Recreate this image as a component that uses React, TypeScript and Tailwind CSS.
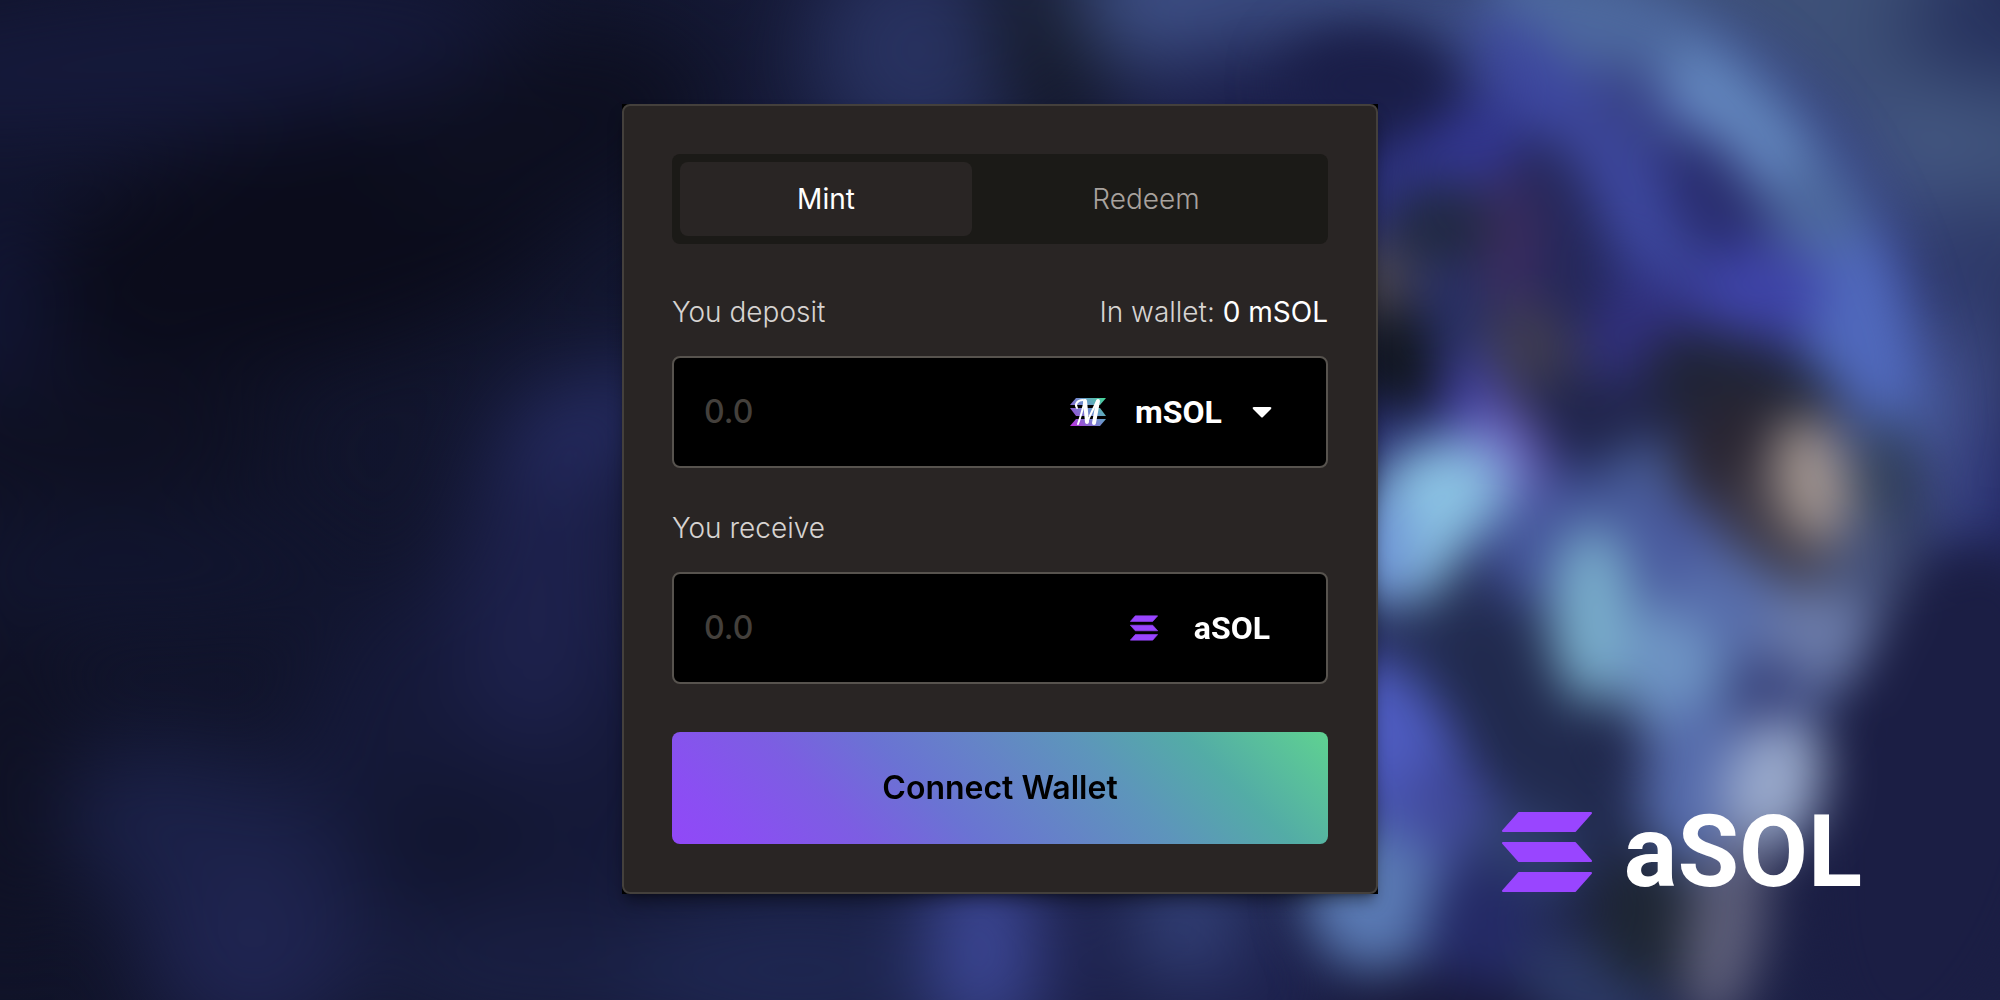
import { useId, useState } from "react";

type Blob = [cx: number, cy: number, rx: number, ry: number, rotate: number, fill: string];

const glow: Blob[] = [
  [140, 60, 380, 80, -6, "#15193a"],
  [0, 310, 50, 120, 0, "#121636"],
  [310, 240, 280, 120, -14, "#0b0c1b"],
  [550, 130, 160, 90, -15, "#0d0f20"],
  [90, 440, 200, 60, 0, "#0e1022"],
  [140, 570, 220, 50, 0, "#11152f"],
  [500, 760, 200, 200, 0, "#151939"],
  [550, 560, 90, 190, 8, "#1d214c"],
  [610, 415, 110, 26, -26, "#2c3474"],
  [220, 850, 170, 90, 20, "#1b2148"],
  [250, 960, 110, 90, 10, "#1f2450"],
  [10, 780, 60, 160, 0, "#0f1124"],
  [440, 840, 100, 50, 0, "#11152f"],
  [600, 980, 240, 60, 0, "#1a2044"],
  [920, 50, 110, 110, 0, "#283260"],
  [800, 970, 180, 90, 0, "#1e2650"],
  [985, 940, 46, 120, 0, "#4450a8"],
  [1100, 970, 60, 80, 0, "#1c204a"],
  [1190, 920, 54, 60, 0, "#3b4c88"],
  [1260, 990, 70, 50, 0, "#1e2250"],
  [1240, 0, 250, 66, 0, "#40538a"],
  [1045, 50, 42, 120, -14, "#10141e"],
  [1300, 95, 150, 60, 0, "#1a1d48"],
  [1800, 90, 330, 230, 20, "#3e5178"],
  [1990, 30, 90, 70, 0, "#25305c"],
  [1950, 140, 70, 60, 0, "#465b84"],
  [1980, 290, 70, 110, 0, "#2d3868"],
  [1950, 450, 70, 130, 0, "#44528e"],
  [2010, 530, 40, 110, 0, "#23286c"],
  [1600, 300, 300, 270, 0, "#2e3480"],
  [1480, 20, 180, 45, 4, "#43588e"],
];

const details: Blob[] = [
  [1370, 85, 90, 60, 0, "#1a1e48"],
  [1470, 160, 90, 46, -20, "#323690"],
  [1590, 150, 44, 170, -38, "#3d479e"],
  [1720, 210, 42, 90, -30, "#292d6e"],
  [1635, 110, 34, 56, -40, "#384288"],
  [1560, 240, 44, 110, -16, "#242758"],
  [1505, 245, 36, 70, 0, "#3c2c60"],
  [1440, 225, 54, 44, 0, "#212942"],
  [1372, 288, 44, 46, 0, "#4a464e"],
  [1400, 360, 56, 54, 0, "#11161f"],
  [1460, 320, 34, 60, 0, "#283064"],
  [1535, 365, 46, 66, -24, "#3f3c50"],
  [1650, 340, 60, 60, 0, "#31307e"],
  [1760, 290, 64, 48, 0, "#3e43a6"],
  [1745, 395, 108, 56, 20, "#1f2436"],
  [1600, 420, 80, 44, 15, "#21254a"],
  [1475, 400, 30, 50, -16, "#40409e"],
  [1580, 470, 50, 34, 30, "#202652"],
  [1660, 500, 70, 60, 0, "#465a94"],
  [1560, 560, 70, 90, 10, "#44559a"],
  [1680, 570, 90, 80, 0, "#495a9e"],
  [1735, 455, 60, 66, 20, "#292532"],
  [1785, 550, 44, 100, -36, "#3b3642"],
  [1812, 480, 38, 66, -12, "#a39690"],
  [1885, 490, 34, 80, 0, "#32415c"],
  [1860, 590, 44, 80, 14, "#46527a"],
  [1500, 455, 44, 50, -30, "#6a60be"],
  [1440, 495, 72, 54, -20, "#86bade"],
  [1415, 530, 52, 76, 20, "#8cc4e4"],
  [1375, 550, 40, 60, 0, "#6e94d4"],
  [1490, 650, 100, 60, 10, "#26315a"],
  [1540, 745, 66, 160, -34, "#212a4e"],
  [1740, 660, 80, 110, -20, "#566caa"],
  [1592, 615, 42, 90, 0, "#78acca"],
  [1672, 680, 50, 72, -10, "#6e94c4"],
  [1820, 640, 60, 52, 20, "#6a7aa8"],
  [1765, 700, 44, 44, 0, "#38427a"],
  [1400, 760, 60, 120, -28, "#4e5cc0"],
  [1460, 830, 50, 80, -36, "#414a9c"],
  [1520, 860, 60, 50, 0, "#30406e"],
  [1700, 790, 60, 90, 0, "#566cac"],
  [1775, 785, 50, 68, 20, "#98a8ca"],
  [1375, 900, 70, 70, 0, "#5a7ab4"],
  [1480, 930, 56, 70, 0, "#242a66"],
  [1440, 1020, 120, 40, 0, "#18193a"],
  [1590, 990, 80, 46, 30, "#2c3966"],
  [1650, 920, 60, 70, -10, "#1e2634"],
  [1725, 930, 38, 100, 10, "#5e5f7a"],
  [1940, 800, 120, 260, 12, "#1b1e44"],
];

const renderBlob = ([cx, cy, rx, ry, rotate, fill]: Blob, i: number) => (
  <ellipse key={i} cx={cx} cy={cy} rx={rx} ry={ry} fill={fill} transform={`rotate(${rotate} ${cx} ${cy})`} />
);

function Backdrop() {
  return (
    <svg
      aria-hidden="true"
      className="absolute inset-0 -z-10 h-full w-full"
      viewBox="0 0 2000 1000"
      preserveAspectRatio="xMidYMid slice"
    >
      <defs>
        <filter id="soft" x="-10%" y="-10%" width="120%" height="120%" colorInterpolationFilters="sRGB">
          <feGaussianBlur stdDeviation="44" />
        </filter>
        <filter id="fine" x="-20%" y="-20%" width="140%" height="140%" colorInterpolationFilters="sRGB">
          <feGaussianBlur stdDeviation="25" />
        </filter>
        <linearGradient id="base">
          <stop offset="0" stopColor="#101329" />
          <stop offset="0.3" stopColor="#12162f" />
          <stop offset="0.6" stopColor="#1c2148" />
          <stop offset="1" stopColor="#1b1f44" />
        </linearGradient>
      </defs>
      <rect width="2000" height="1000" fill="url(#base)" />
      <g filter="url(#soft)">{glow.map(renderBlob)}</g>
      <g filter="url(#fine)">
        <path
          d="M1490 10C1620 20 1680 50 1740 110C1810 190 1870 290 1880 440"
          fill="none"
          stroke="#4d699e"
          strokeWidth="104"
        />
        <path d="M1670 70C1710 100 1745 135 1780 180" fill="none" stroke="#6488c0" strokeWidth="72" />
        <path d="M1830 250C1860 330 1870 380 1868 450" fill="none" stroke="#5069bc" strokeWidth="110" />
        {details.map(renderBlob)}
      </g>
    </svg>
  );
}

function SolMark({ className }: { className: string }) {
  return (
    <svg aria-hidden="true" viewBox="0 0 90 80" className={className}>
      <g fill="#9945ff" stroke="#9945ff" strokeWidth="2" strokeLinejoin="round">
        <path d="M17 1H89L73 19H1Z" />
        <path d="M1 31H73L89 49H17Z" />
        <path d="M17 61H89L73 79H1Z" />
      </g>
    </svg>
  );
}

function MSolMark({ className }: { className: string }) {
  return (
    <svg aria-hidden="true" viewBox="0 0 38 30" className={className}>
      <defs>
        <linearGradient id="msol" x1="2" y1="30" x2="34" y2="0" gradientUnits="userSpaceOnUse">
          <stop offset="0" stopColor="#c22ee0" />
          <stop offset="0.3" stopColor="#8a63d2" />
          <stop offset="0.6" stopColor="#6d94cc" />
          <stop offset="1" stopColor="#45d69a" />
        </linearGradient>
      </defs>
      <g fill="url(#msol)">
        <path d="M7 1H37L31 8H1Z" />
        <path d="M1 11H31L37 19H7Z" />
        <path d="M7 22H37L31 29H1Z" />
      </g>
      <g fill="none" stroke="#fff" strokeLinecap="round" strokeLinejoin="round">
        <path d="M8 11C5 7 9 3 14 3" strokeWidth="2" />
        <path d="M16 3C14 11 12 19 9 27" strokeWidth="2" />
        <path d="M16 4L18 25" strokeWidth="4" />
        <path d="M18 25L28 4" strokeWidth="2" />
        <path d="M29 4L25 26" strokeWidth="4" />
      </g>
    </svg>
  );
}

export default function App() {
  const [tab, setTab] = useState("Mint");
  const depositId = useId();
  const receiveId = useId();

  const field =
    "flex h-28 items-center rounded-lg border-2 border-[#57534e] bg-black pl-[30px]";
  const amount =
    "min-w-0 flex-1 bg-transparent text-[32px] leading-10 font-medium text-white outline-none placeholder:text-[#44403c]";
  const label = "text-[28px] leading-10 font-light text-[#d6d3d1]";

  return (
    <main className="relative isolate grid min-h-screen grid-cols-[1fr_minmax(0,756px)_1fr] items-center overflow-hidden bg-[#101329] pb-[2px] font-['Inter',sans-serif]">
      <Backdrop />

      <div className="col-start-2 bg-black shadow-lg shadow-black/40">
        <section className="rounded-lg border-2 border-[#44403c] bg-[#292524] p-12">
          <div role="tablist" className="grid grid-cols-[292fr_348fr] rounded-lg bg-[#1b1a17] p-2">
            {["Mint", "Redeem"].map((name) => (
              <button
                key={name}
                role="tab"
                type="button"
                aria-selected={tab === name}
                onClick={() => setTab(name)}
                className={
                  tab === name
                    ? "rounded-lg bg-[#292524] py-4 text-[28px] leading-[42px] text-white"
                    : "rounded-lg py-4 text-[28px] leading-[42px] font-light text-[#a8a29e]"
                }
              >
                {name}
              </button>
            ))}
          </div>

          <div className="mt-12 flex items-center justify-between">
            <label htmlFor={depositId} className={label}>
              You deposit
            </label>
            <p className={label}>
              In wallet: <span className="font-normal text-white">0 mSOL</span>
            </p>
          </div>
          <div className={`mt-6 ${field} pr-[54px]`}>
            <input id={depositId} inputMode="decimal" placeholder="0.0" className={amount} />
            <MSolMark className="mr-7 h-[30px] w-[38px]" />
            <select
              aria-label="Deposit token"
              className="appearance-none bg-transparent font-['Roboto',sans-serif] text-[32px] leading-10 font-bold text-white outline-none"
            >
              <option>mSOL</option>
            </select>
            <svg aria-hidden="true" viewBox="0 0 20 12" className="ml-[30px] h-3 w-5 fill-white">
              <path d="M2 1H18Q20 1 19 3L11 11Q10 12 9 11L1 3Q0 1 2 1Z" />
            </svg>
          </div>

          <div className="mt-10 flex">
            <label htmlFor={receiveId} className={label}>
              You receive
            </label>
          </div>
          <div className={`mt-6 ${field} pr-14`}>
            <input id={receiveId} inputMode="decimal" placeholder="0.0" className={amount} />
            <SolMark className="mr-9 h-[26px] w-7" />
            <span className="font-['Roboto',sans-serif] text-[32px] leading-10 font-bold text-white">aSOL</span>
          </div>

          <button
            type="button"
            className="mt-12 h-28 w-full rounded-lg bg-[linear-gradient(45deg,#9148f8_0%,#8a4ff2_10%,#7c5ee2_26%,#6a73d3_40%,#6485c6_54%,#5d95bb_66%,#53aca6_81%,#5fd291_100%)] text-[32px] leading-10 font-semibold text-black"
          >
            Connect Wallet
          </button>
        </section>
      </div>

      <div className="mb-[102px] flex items-center gap-8 self-end justify-self-end pr-[138px]">
        <SolMark className="h-20 w-[90px]" />
        <span className="font-['Roboto',sans-serif] text-[100px] leading-[88px] font-bold text-white">aSOL</span>
      </div>
    </main>
  );
}
